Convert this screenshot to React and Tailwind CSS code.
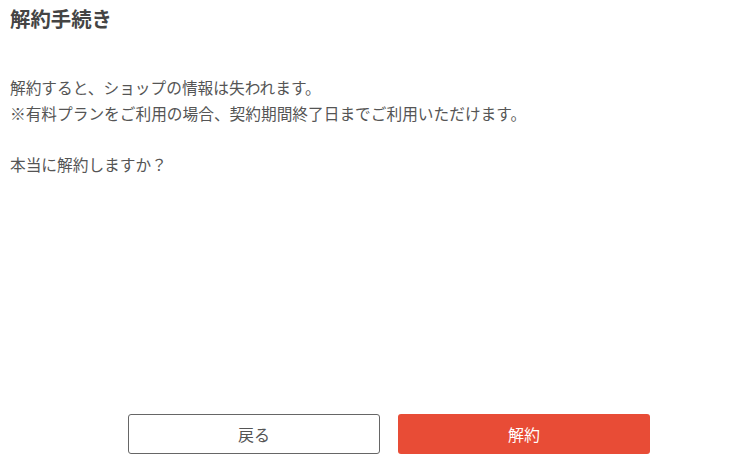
export default function App() {
  return (
    <div
      className="w-[738px] h-[469px] bg-white text-[#444] flex flex-col"
      style={{ fontFamily: '"Noto Sans CJK JP", "Noto Sans", sans-serif' }}
    >
      <h1 className="pl-[10px] pt-[4px] text-[20.4px] leading-[28px] font-bold text-[#444]">解約手続き</h1>
      <div className="pl-[10px] mt-[43px] text-[15.7px] leading-[26px] text-[#555]">
        <p>解約すると、ショップの情報は失われます。</p>
        <p>※有料プランをご利用の場合、契約期間終了日までご利用いただけます。</p>
        <p className="mt-[25px]">本当に解約しますか？</p>
      </div>
      <div className="mt-auto mb-[15px] flex gap-[18px] pl-[128px]">
        <button className="w-[252px] h-[40px] rounded-[3px] border border-[#666] bg-white text-[16px] text-[#555]">
          戻る
        </button>
        <button className="w-[252px] h-[40px] rounded-[3px] bg-[#E84C36] text-[16px] text-white">
          解約
        </button>
      </div>
    </div>
  );
}
